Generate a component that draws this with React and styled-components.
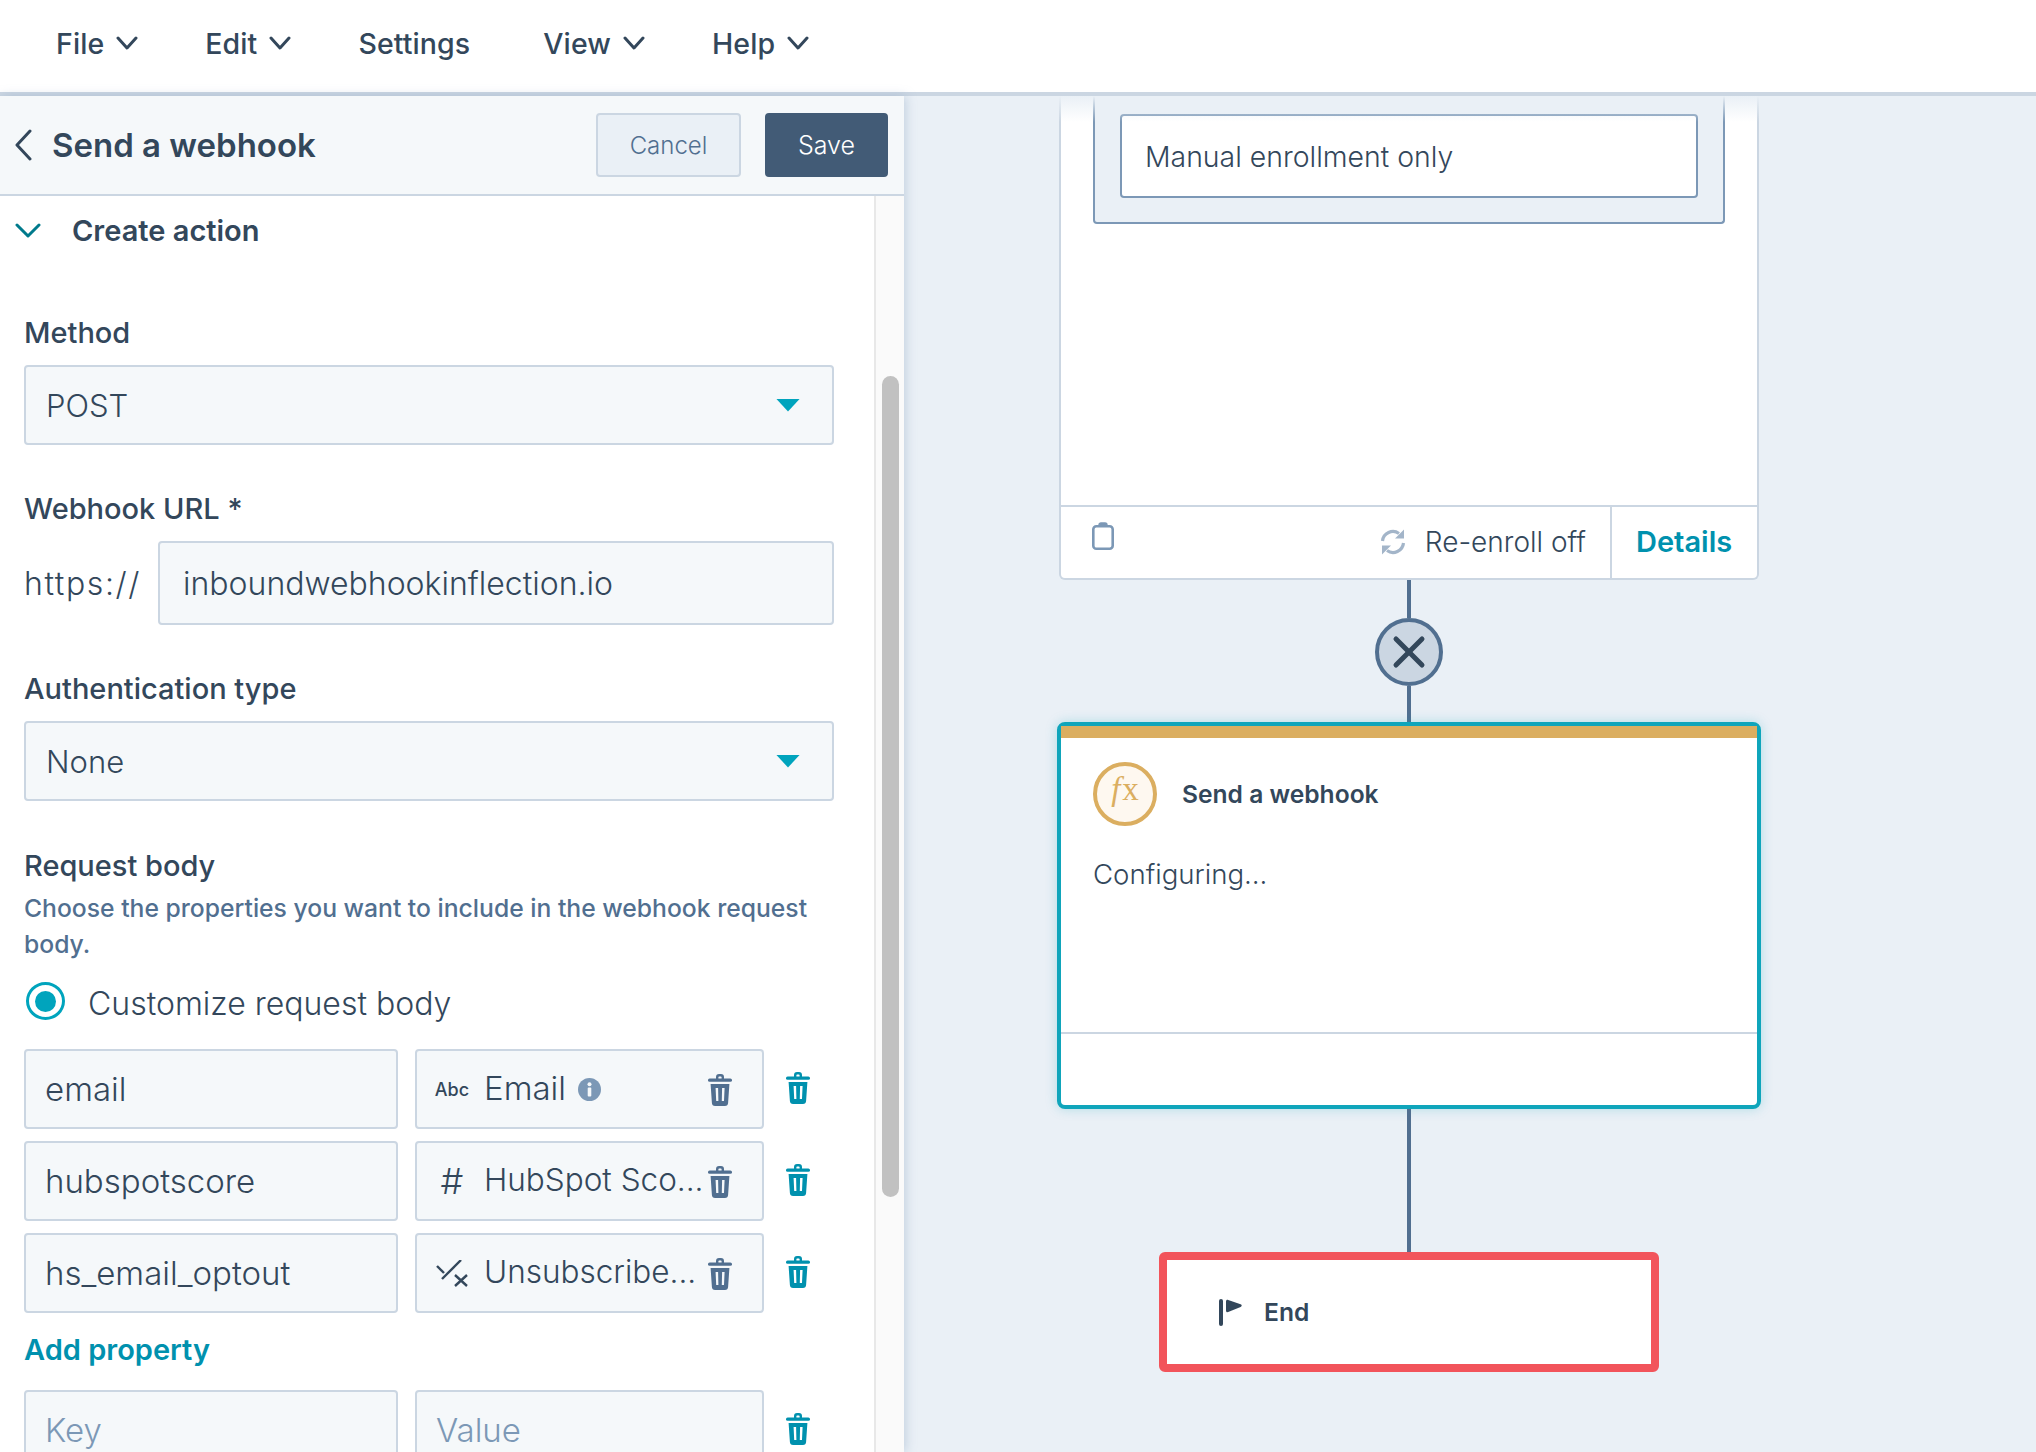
import React from 'react'
import styled, { createGlobalStyle } from 'styled-components'
import { X } from 'lucide-react'

const GlobalStyle = createGlobalStyle`
  html, body {
    margin: 0;
    padding: 0;
    background: #fff;
  }
  * {
    box-sizing: border-box;
  }
`

const Page = styled.div`
  width: 2036px;
  height: 1452px;
  display: flex;
  flex-direction: column;
  overflow: hidden;
  font-family: Inter, 'Noto Sans', 'Liberation Sans', sans-serif;
  color: #33475b;
`

const TopBar = styled.nav`
  height: 96px;
  flex: none;
  display: flex;
  align-items: center;
  gap: 67px;
  padding: 0 0 6px 56px;
  background: #fff;
  border-bottom: 4px solid #cbd6e2;
`

const MenuItem = styled.div`
  display: flex;
  align-items: center;
  gap: 12px;
  margin-right: ${({ $plain }) => ($plain ? '6px' : '0')};
  font-size: 28.5px;
  font-weight: 500;
  letter-spacing: 0.1px;
  color: #33475b;
`

const Main = styled.div`
  flex: 1;
  display: flex;
  min-height: 0;
`

const Sidebar = styled.aside`
  width: 904px;
  flex: none;
  display: flex;
  flex-direction: column;
  background: #fff;
  box-shadow: 2px 0 10px rgba(124, 152, 182, 0.35);
  z-index: 2;
`

const SideHeader = styled.header`
  height: 100px;
  flex: none;
  display: flex;
  align-items: center;
  padding: 0 16px 0 15px;
  background: #f5f8fa;
  border-bottom: 2px solid #cbd6e2;
`

const SideTitle = styled.h1`
  margin: 0 0 0 20px;
  flex: 1;
  font-size: 33px;
  font-weight: 600;
  color: #33475b;
`

const Button = styled.button`
  height: 64px;
  border-radius: 4px;
  font-family: inherit;
  font-size: ${({ $primary }) => ($primary ? '25px' : '24px')};
  font-weight: 300;
  padding: 0;
  width: ${({ $primary }) => ($primary ? '123px' : '145px')};
  margin-left: ${({ $primary }) => ($primary ? '24px' : '0')};
  color: ${({ $primary }) => ($primary ? '#fff' : '#516f90')};
  background: ${({ $primary }) => ($primary ? '#425b76' : '#eaf0f6')};
  border: 2px solid ${({ $primary }) => ($primary ? '#425b76' : '#cbd6e2')};
`

const SideBody = styled.div`
  flex: 1;
  display: flex;
  min-height: 0;
`

const Form = styled.div`
  flex: 1;
  min-width: 0;
  overflow: hidden;
  padding: 0 40px 0 24px;
`

const ScrollTrack = styled.div`
  width: 30px;
  flex: none;
  padding: 180px 5px 0 6px;
  background: #fafafa;
  border-left: 2px solid #e8e8e8;
`

const ScrollThumb = styled.div`
  height: 821px;
  border-radius: 9px;
  background: #c1c1c1;
`

const SectionToggle = styled.div`
  height: 69px;
  margin-left: -24px;
  display: flex;
  align-items: center;
  gap: 31px;
  padding-left: 15px;
  font-size: 29px;
  font-weight: 600;
  color: #33475b;
`

const Label = styled.div`
  height: 36px;
  line-height: 36px;
  margin-top: ${({ $top }) => $top}px;
  margin-bottom: 14px;
  font-size: 29px;
  font-weight: 500;
  color: #33475b;
`

const Select = styled.div`
  height: 80px;
  display: flex;
  align-items: center;
  justify-content: space-between;
  padding: 0 32px 0 20px;
  background: #f5f8fa;
  border: 2px solid #cbd6e2;
  border-radius: 4px;
  font-size: 31px;
  font-weight: 300;
`

const Caret = styled.span`
  width: 24px;
  height: 13px;
  background: #00a4bd;
  clip-path: polygon(0 0, 100% 0, 50% 100%);
`

const UrlRow = styled.div`
  display: flex;
  align-items: center;
`

const UrlPrefix = styled.span`
  width: 134px;
  flex: none;
  font-size: 32px;
  font-weight: 300;
  letter-spacing: 1.6px;
`

const Input = styled.div`
  height: ${({ $h }) => $h || 80}px;
  flex: ${({ $grow }) => ($grow ? '1' : 'none')};
  width: ${({ $w }) => ($w ? `${$w}px` : 'auto')};
  display: flex;
  align-items: center;
  padding-left: ${({ $pad }) => $pad || 19}px;
  background: #f5f8fa;
  border: 2px solid #cbd6e2;
  border-radius: 4px;
  font-size: ${({ $size }) => $size || 33}px;
  font-weight: 300;
  color: ${({ $placeholder }) => ($placeholder ? '#7c98b6' : '#33475b')};
  white-space: nowrap;
`

const Help = styled.p`
  margin: -8px 0 0;
  line-height: 36px;
  font-size: 24.7px;
  font-weight: 500;
  color: #516f90;
`

const RadioRow = styled.div`
  height: 38px;
  margin: 20px 0 29px 2px;
  display: flex;
  align-items: center;
  gap: 23px;
  font-size: 32px;
  font-weight: 300;
`

const RadioLabel = styled.span`
  margin-top: 4px;
`

const Radio = styled.span`
  width: 39px;
  height: 38px;
  display: flex;
  align-items: center;
  justify-content: center;
  border: 3px solid #00a4bd;
  border-radius: 50%;
  &::after {
    content: '';
    width: 21px;
    height: 21px;
    border-radius: 50%;
    background: #00a4bd;
  }
`

const PropertyRow = styled.div`
  display: flex;
  align-items: center;
  gap: 17px;
  margin-bottom: 12px;
`

const TypeSlot = styled.span`
  width: 32px;
  margin-right: 16px;
  flex: none;
  display: flex;
  justify-content: center;
  font-size: ${({ $small }) => ($small ? '18px' : '36px')};
  font-weight: ${({ $small }) => ($small ? 500 : 300)};
`

const ValueName = styled.span`
  flex: 1;
  display: flex;
  align-items: center;
  gap: 12px;
  min-width: 0;
  font-size: ${({ $wide }) => ($wide ? '33px' : '31.5px')};
  margin-top: -3px;
`

const InnerTrash = styled.span`
  flex: none;
  margin: 2px 30px 0 0;
  display: flex;
  color: #516f90;
`

const OuterTrash = styled.span`
  flex: none;
  margin-left: 5px;
  margin-top: -2px;
  display: flex;
  color: #0091ae;
`

const AddLink = styled.a`
  display: block;
  height: 36px;
  line-height: 36px;
  margin: 19px 0 22px;
  font-size: 29px;
  font-weight: 600;
  color: #0091ae;
`

const Canvas = styled.section`
  position: relative;
  flex: 1;
  min-width: 0;
  display: flex;
  flex-direction: column;
  align-items: center;
  padding-right: 122px;
  background: #eaf0f6;
  overflow: hidden;
  &::after {
    content: '';
    position: absolute;
    top: 0;
    left: 0;
    right: 0;
    height: 26px;
    background: linear-gradient(#eaf0f6, rgba(234, 240, 246, 0));
  }
`

const TriggerCard = styled.div`
  width: 700px;
  height: 484px;
  flex: none;
  display: flex;
  flex-direction: column;
  background: #fff;
  border: 2px solid #cbd6e2;
  border-top: none;
  border-radius: 0 0 6px 6px;
`

const FilterBox = styled.div`
  height: 128px;
  margin: 0 32px;
  padding: 18px 25px 0;
  background: #eaf0f6;
  border: 2px solid #7c98b6;
  border-top: none;
  border-radius: 0 0 4px 4px;
`

const FilterValue = styled.div`
  height: 84px;
  display: flex;
  align-items: center;
  padding-left: 23px;
  background: #fff;
  border: 2px solid #7c98b6;
  border-radius: 4px;
  font-size: 28.4px;
  font-weight: 300;
`

const CardFooter = styled.div`
  height: 73px;
  margin-top: auto;
  display: flex;
  align-items: center;
  border-top: 2px solid #cbd6e2;
`

const FooterLeft = styled.div`
  flex: 1;
  height: 100%;
  display: flex;
  align-items: center;
  padding: 0 24px 2px 31px;
  font-size: 28px;
  font-weight: 300;
`

const ClipboardSlot = styled.span`
  display: flex;
  margin: -12px auto 0 0;
  color: #7c98b6;
`

const SyncSlot = styled.span`
  display: flex;
  margin-right: 18px;
  color: #a3b5c9;
`

const DetailsLink = styled.a`
  width: 147px;
  height: 100%;
  flex: none;
  display: flex;
  align-items: center;
  padding: 0 0 2px 24px;
  border-left: 2px solid #cbd6e2;
  font-size: 29px;
  font-weight: 600;
  color: #0091ae;
`

const Wire = styled.div`
  width: 4px;
  flex: none;
  height: ${({ $h }) => $h}px;
  background: #516f90;
`

const RemoveNode = styled.div`
  width: 68px;
  height: 68px;
  flex: none;
  display: flex;
  align-items: center;
  justify-content: center;
  border: 4px solid #516f90;
  border-radius: 50%;
  background: #cbd6e2;
  color: #33475b;
`

const ActionCard = styled.div`
  width: 704px;
  height: 387px;
  flex: none;
  display: flex;
  flex-direction: column;
  background: #fff;
  border: 4px solid #0fa5bb;
  border-radius: 8px;
  box-shadow: 0 0 12px rgba(0, 164, 189, 0.25);
`

const ActionStripe = styled.div`
  height: 12px;
  flex: none;
  background: #dbae60;
`

const ActionHead = styled.div`
  display: flex;
  align-items: center;
  gap: 25px;
  padding: 24px 32px 0;
`

const FxBadge = styled.span`
  width: 64px;
  height: 64px;
  display: flex;
  align-items: center;
  justify-content: center;
  padding-bottom: 10px;
  border: 4px solid #dbae60;
  border-radius: 50%;
  background: #fef8f0;
  color: #dbae60;
  font-family: 'Liberation Serif', serif;
  font-size: 33px;
  & i {
    margin-right: 2px;
  }
`

const NodeTitle = styled.span`
  font-size: 24.6px;
  font-weight: 600;
  color: #33475b;
`

const ActionBody = styled.div`
  height: 40px;
  line-height: 40px;
  margin: 28px 32px 0;
  font-size: 27.6px;
  font-weight: 300;
`

const ActionFoot = styled.div`
  height: 73px;
  margin-top: auto;
  border-top: 2px solid #cbd6e2;
`

const EndCard = styled.div`
  width: 500px;
  height: 120px;
  flex: none;
  display: flex;
  align-items: center;
  gap: 22px;
  padding-left: 52px;
  background: #fff;
  border: 8px solid #f2545b;
  border-radius: 6px;
`

const Chevron = ({ w, h, sw = 3, color = '#33475b', left }) => (
  <svg width={w} height={h} viewBox={`0 0 ${w} ${h}`} fill="none" stroke={color} strokeWidth={sw} strokeLinecap="round" strokeLinejoin="round">
    {left ? (
      <path d={`M${w - 2} 2 L2 ${h / 2} L${w - 2} ${h - 2}`} />
    ) : (
      <path d={`M2 2 L${w / 2} ${h - 2} L${w - 2} 2`} />
    )}
  </svg>
)

const TrashIcon = ({ size = 24 }) => (
  <svg width={size} height={(size * 32) / 24} viewBox="0 0 24 32" fill="currentColor">
    <path d="M8 5V3a3 3 0 0 1 3-3h2a3 3 0 0 1 3 3v2h-2.4V3.2a.8.8 0 0 0-.8-.8h-1.6a.8.8 0 0 0-.8.8V5Z" />
    <rect x="0" y="4.6" width="24" height="3.2" rx="1.6" />
    <path
      fillRule="evenodd"
      d="M2.6 10h18.8l-1.3 19a3.2 3.2 0 0 1-3.2 3H7.1a3.2 3.2 0 0 1-3.2-3ZM7.6 14l.6 13h2.2l-.3-13Zm6.5 0-.3 13H16l.6-13Z"
    />
  </svg>
)

const InfoIcon = () => (
  <svg width="23" height="23" viewBox="0 0 23 23" style={{ marginTop: 3 }}>
    <circle cx="11.5" cy="11.5" r="11.5" fill="#7c98b6" />
    <circle cx="11.5" cy="6.2" r="2" fill="#f5f8fa" />
    <rect x="9.7" y="9.6" width="3.6" height="9" rx="1" fill="#f5f8fa" />
  </svg>
)

const CheckCrossIcon = () => (
  <svg width="32" height="27" viewBox="0 0 32 27" fill="none" stroke="#33475b" strokeWidth="2.4">
    <path d="M1 6l7 7" />
    <path d="M6 19L25 0" />
    <path d="M19 15l12 11M31 15L19 26" />
  </svg>
)

const ClipboardIcon = () => (
  <svg width="22" height="28" viewBox="0 0 22 28" fill="none" stroke="currentColor" strokeWidth="2.6">
    <rect x="1.3" y="4.3" width="19.4" height="22.4" rx="3" />
    <path d="M7 4.5V3a2 2 0 0 1 2-2h4a2 2 0 0 1 2 2v1.5" fill="currentColor" strokeWidth="1.4" />
  </svg>
)

const SyncIcon = () => (
  <svg width="28" height="28" viewBox="0 0 28 28" fill="none" stroke="currentColor" strokeWidth="3.2">
    <path d="M3.5 13A10.5 10.5 0 0 1 20 5.5" />
    <path d="M24.5 15A10.5 10.5 0 0 1 8 22.5" />
    <path d="M25 1.5V10.5H16Z" fill="currentColor" stroke="none" />
    <path d="M3 26.5V17.5H12Z" fill="currentColor" stroke="none" />
  </svg>
)

const FlagIcon = () => (
  <svg width="23" height="27" viewBox="0 0 23 27" fill="#33475b">
    <rect x="0" y="0" width="4" height="27" rx="2" />
    <path d="M7 2.5c0-1.4 1-2 2.2-1.6l12.4 4.4c1.5.5 1.5 2.1 0 2.7L9.2 13c-1.2.5-2.2-.2-2.2-1.6Z" />
  </svg>
)

const properties = [
  { key: 'email', name: 'Email', type: 'Abc', info: true },
  { key: 'hubspotscore', name: 'HubSpot Sco...', type: '#' },
  { key: 'hs_email_optout', name: 'Unsubscribe...', type: 'bool' },
]

const menu = [
  { label: 'File', caret: true },
  { label: 'Edit', caret: true },
  { label: 'Settings' },
  { label: 'View', caret: true },
  { label: 'Help', caret: true },
]

const App = () => (
  <Page>
    <GlobalStyle />
    <TopBar>
      {menu.map((item) => (
        <MenuItem key={item.label} $plain={!item.caret}>
          {item.label}
          {item.caret && <Chevron w={22} h={14} />}
        </MenuItem>
      ))}
    </TopBar>
    <Main>
      <Sidebar>
        <SideHeader>
          <Chevron left w={17} h={32} />
          <SideTitle>Send a webhook</SideTitle>
          <Button>Cancel</Button>
          <Button $primary>Save</Button>
        </SideHeader>
        <SideBody>
          <Form>
            <SectionToggle>
              <Chevron w={26} h={15} color="#007a8c" />
              Create action
            </SectionToggle>
            <Label $top={50}>Method</Label>
            <Select>
              POST
              <Caret />
            </Select>
            <Label $top={46}>Webhook URL *</Label>
            <UrlRow>
              <UrlPrefix>https://</UrlPrefix>
              <Input $grow $h={84} $pad={23} $size={32}>
                inboundwebhookinflection.io
              </Input>
            </UrlRow>
            <Label $top={46}>Authentication type</Label>
            <Select>
              None
              <Caret />
            </Select>
            <Label $top={47}>Request body</Label>
            <Help>Choose the properties you want to include in the webhook request body.</Help>
            <RadioRow>
              <Radio />
              <RadioLabel>Customize request body</RadioLabel>
            </RadioRow>
            {properties.map((row) => (
              <PropertyRow key={row.key}>
                <Input $w={374}>{row.key}</Input>
                <Input $w={349}>
                  <TypeSlot $small={row.type === 'Abc'}>
                    {row.type === 'bool' ? <CheckCrossIcon /> : row.type}
                  </TypeSlot>
                  <ValueName $wide={row.info}>
                    {row.name}
                    {row.info && <InfoIcon />}
                  </ValueName>
                  <InnerTrash>
                    <TrashIcon />
                  </InnerTrash>
                </Input>
                <OuterTrash>
                  <TrashIcon />
                </OuterTrash>
              </PropertyRow>
            ))}
            <AddLink>Add property</AddLink>
            <PropertyRow>
              <Input $w={374} $placeholder>
                Key
              </Input>
              <Input $w={349} $placeholder>
                Value
              </Input>
              <OuterTrash>
                <TrashIcon />
              </OuterTrash>
            </PropertyRow>
          </Form>
          <ScrollTrack>
            <ScrollThumb />
          </ScrollTrack>
        </SideBody>
      </Sidebar>
      <Canvas>
        <TriggerCard>
          <FilterBox>
            <FilterValue>Manual enrollment only</FilterValue>
          </FilterBox>
          <CardFooter>
            <FooterLeft>
              <ClipboardSlot>
                <ClipboardIcon />
              </ClipboardSlot>
              <SyncSlot>
                <SyncIcon />
              </SyncSlot>
              Re-enroll off
            </FooterLeft>
            <DetailsLink>Details</DetailsLink>
          </CardFooter>
        </TriggerCard>
        <Wire $h={38} />
        <RemoveNode>
          <X size={52} strokeWidth={2.3} />
        </RemoveNode>
        <Wire $h={36} />
        <ActionCard>
          <ActionStripe />
          <ActionHead>
            <FxBadge>
              <i>f</i>x
            </FxBadge>
            <NodeTitle>Send a webhook</NodeTitle>
          </ActionHead>
          <ActionBody>Configuring...</ActionBody>
          <ActionFoot />
        </ActionCard>
        <Wire $h={143} />
        <EndCard>
          <FlagIcon />
          <NodeTitle>End</NodeTitle>
        </EndCard>
      </Canvas>
    </Main>
  </Page>
)

export default App
